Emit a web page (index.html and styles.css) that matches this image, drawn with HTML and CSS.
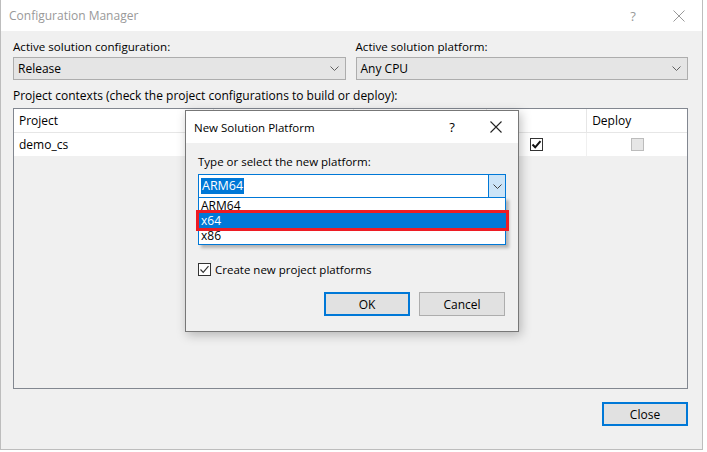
FILE: index.html
```html
<!DOCTYPE html>
<html lang="en">
<head>
    <meta charset="UTF-8">
    <title>Configuration Manager</title>
    <link rel="stylesheet" href="styles.css">
</head>
<body>

<div class="window">
    <div class="titlebar">
        <span class="title">Configuration Manager</span>
        <span class="title-btn help">?</span>
        <span class="title-btn close">
            <svg width="12" height="12" viewBox="0 0 12 12"><path d="M0.5 0.5 L11.5 11.5 M11.5 0.5 L0.5 11.5" stroke="#999" stroke-width="1" fill="none"/></svg>
        </span>
    </div>

    <div class="window-body">
        <div class="pickers">
            <div class="picker">
                <label>Active solution configuration:</label>
                <div class="select">
                    <span>Release</span>
                    <svg width="9" height="5" viewBox="0 0 9 5"><path d="M0.5 0.5 L4.5 4.5 L8.5 0.5" stroke="#606060" fill="none"/></svg>
                </div>
            </div>
            <div class="picker">
                <label>Active solution platform:</label>
                <div class="select">
                    <span>Any CPU</span>
                    <svg width="9" height="5" viewBox="0 0 9 5"><path d="M0.5 0.5 L4.5 4.5 L8.5 0.5" stroke="#606060" fill="none"/></svg>
                </div>
            </div>
        </div>

        <p class="contexts-label">Project contexts (check the project configurations to build or deploy):</p>

        <div class="grid">
            <div class="grid-row grid-head">
                <div class="cell c-project">Project</div>
                <div class="cell c-config"></div>
                <div class="cell c-platform"></div>
                <div class="cell c-build"></div>
                <div class="cell c-deploy">Deploy</div>
            </div>
            <div class="grid-row">
                <div class="cell c-project">demo_cs</div>
                <div class="cell c-config"></div>
                <div class="cell c-platform"></div>
                <div class="cell c-build center"><span class="check on">
                    <svg width="11" height="11" viewBox="0 0 11 11"><path d="M1.5 5.5 L4.2 8.3 L9.5 2.2" stroke="#111" stroke-width="2" fill="none"/></svg>
                </span></div>
                <div class="cell c-deploy center"><span class="check disabled"></span></div>
            </div>
        </div>

        <div class="footer">
            <button class="btn default">Close</button>
        </div>
    </div>

    <!-- modal on top of the manager -->
    <div class="dialog">
        <div class="dialog-title">
            <span class="title">New Solution Platform</span>
            <span class="title-btn help">?</span>
            <span class="title-btn close">
                <svg width="12" height="12" viewBox="0 0 12 12"><path d="M0.5 0.5 L11.5 11.5 M11.5 0.5 L0.5 11.5" stroke="#222" stroke-width="1.1" fill="none"/></svg>
            </span>
        </div>
        <div class="dialog-body">
            <label>Type or select the new platform:</label>
            <div class="combo">
                <span class="combo-text"><span class="selected-text">ARM64</span></span>
                <span class="combo-btn">
                    <svg width="9" height="5" viewBox="0 0 9 5"><path d="M0.5 0.5 L4.5 4.5 L8.5 0.5" stroke="#404040" fill="none"/></svg>
                </span>
                <ul class="combo-list">
                    <li>ARM64</li>
                    <li class="active">x64</li>
                    <li>x86</li>
                </ul>
                <div class="mark"></div>
            </div>
            <div class="checkbox-row">
                <span class="check on">
                    <svg width="11" height="11" viewBox="0 0 11 11"><path d="M1.5 5.5 L4.2 8.3 L9.5 2.2" stroke="#333" stroke-width="1.2" fill="none"/></svg>
                </span>
                <span>Create new project platforms</span>
            </div>
            <div class="dialog-buttons">
                <button class="btn default">OK</button>
                <button class="btn">Cancel</button>
            </div>
        </div>
    </div>
</div>

</body>
</html>
```

FILE: styles.css
```css
* {
    margin: 0;
    padding: 0;
    box-sizing: border-box;
}

body {
    background: #fff;
    font-family: "Open Sans", "Noto Sans", sans-serif;
    font-size: 12px;
    color: #000;
}

.window {
    position: relative;
    width: 703px;
    height: 450px;
    background: #f0f0f0;
    border: 1px solid #bdbdbd;
    border-top: none;
    display: flex;
    flex-direction: column;
}

.titlebar {
    height: 31px;
    background: #fff;
    display: flex;
    align-items: center;
    padding-left: 8px;
    flex-shrink: 0;
}

.titlebar .title {
    color: #999;
    font-size: 12px;
    flex: 1;
}

.title-btn {
    display: flex;
    align-items: center;
    justify-content: center;
}

.titlebar .help {
    color: #999;
    width: 46px;
    font-size: 13px;
}

.titlebar .close {
    width: 46px;
}

.window-body {
    flex: 1;
    padding: 7px 14px 0 12px;
    display: flex;
    flex-direction: column;
}

.pickers {
    display: flex;
    gap: 10px;
}

.picker {
    flex: 1;
    display: flex;
    flex-direction: column;
    gap: 1px;
}

.picker label {
    height: 18px;
    line-height: 18px;
    font-size: 11.6px;
}

.select {
    height: 23px;
    border: 1px solid #adadad;
    background: #e5e5e5;
    display: flex;
    align-items: center;
    justify-content: space-between;
    padding: 0 6px 0 4px;
}

.contexts-label {
    margin-top: 7px;
    height: 18px;
    line-height: 18px;
}

.grid {
    margin-top: 3px;
    height: 281px;
    border: 1px solid #828790;
    background: #f0f0f0;
}

.grid-row {
    display: flex;
    height: 24px;
    background: #fff;
    border-bottom: 1px solid #f0f0f0;
}

.grid-head {
    height: 24px;
    background: #fff;
    border-bottom: 1px solid #e6e6e6;
}

.cell {
    display: flex;
    align-items: center;
    padding-left: 5px;
    border-right: 1px solid #f0f0f0;
}

.grid-head .cell {
    border-right-color: #e6e6e6;
}

.c-project { width: 200px; }
.c-config { width: 140px; }
.c-platform { width: 134px; }
.c-build { width: 100px; }
.c-deploy { width: 100px; border-right: none; }

.center {
    justify-content: center;
    padding-left: 0;
}

.check {
    width: 13px;
    height: 13px;
    border: 1px solid #333;
    background: #fff;
    display: flex;
    align-items: center;
    justify-content: center;
}

.check.disabled {
    border-color: #bcbcbc;
    background: #e6e6e6;
}

.footer {
    display: flex;
    justify-content: flex-end;
    padding: 13px 0 0;
}

.btn {
    width: 86px;
    height: 24px;
    border: 1px solid #adadad;
    background: #e1e1e1;
    font-family: inherit;
    font-size: 12px;
    color: #000;
}

.btn.default {
    border: 2px solid #0078d7;
}

/* New Solution Platform */
.dialog {
    position: absolute;
    left: 184px;
    top: 110px;
    width: 334px;
    height: 222px;
    background: #f0f0f0;
    border: 1px solid #777;
    box-shadow: 2px 3px 10px rgba(0, 0, 0, 0.25);
    display: flex;
    flex-direction: column;
    font-size: 11.5px;
}

.dialog-title {
    height: 32px;
    background: #fff;
    display: flex;
    align-items: center;
    padding-left: 8px;
}

.dialog-title .title {
    flex: 1;
}

.dialog-title .help {
    width: 44px;
    font-size: 13px;
}

.dialog-title .close {
    width: 44px;
}

.dialog-body {
    padding: 10px 13px 0 12px;
    display: flex;
    flex-direction: column;
}

.dialog-body label {
    height: 18px;
    line-height: 18px;
}

.combo {
    position: relative;
    margin-top: 3px;
    width: 308px;
    height: 24px;
    border: 1px solid #0078d7;
    background: #fff;
    display: flex;
}

.combo-text {
    flex: 1;
    display: flex;
    align-items: center;
    padding-left: 2px;
    font-size: 12.5px;
}

.selected-text {
    background: #0078d7;
    color: #fff;
    padding: 0 1px;
    line-height: 16px;
}

.combo-btn {
    width: 17px;
    background: #cce4f7;
    border-left: 1px solid #0078d7;
    display: flex;
    align-items: center;
    justify-content: center;
}

.combo-list {
    position: absolute;
    left: -1px;
    top: 22px;
    width: 308px;
    list-style: none;
    background: #fff;
    border: 1px solid #0078d7;
    box-shadow: 3px 3px 3px rgba(0, 0, 0, 0.25);
    padding: 0 0 1px;
    font-size: 12px;
}

.combo-list li {
    height: 15px;
    line-height: 15px;
    padding-left: 2px;
}

.combo-list li.active {
    background: #0078d7;
    color: #fff;
}

.mark {
    position: absolute;
    left: -3px;
    top: 35px;
    width: 313px;
    height: 21px;
    border: 3px solid #ed1c24;
}

.checkbox-row {
    margin-top: 64px;
    display: flex;
    align-items: center;
    gap: 4px;
}

.dialog-buttons {
    display: flex;
    justify-content: flex-end;
    gap: 9px;
    margin-top: 15px;
}
```
